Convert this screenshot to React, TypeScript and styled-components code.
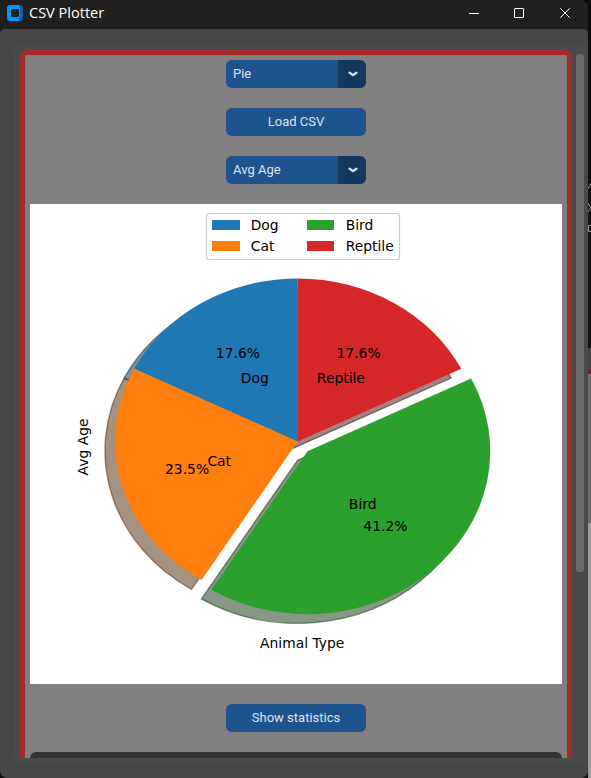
import React from "react";
import styled, { createGlobalStyle } from "styled-components";

const GlobalStyle = createGlobalStyle`
  * { box-sizing: border-box; }
  html, body { margin: 0; padding: 0; overflow: hidden; background: #0c0c10; }
`;

const Desktop = styled.div`
  display: flex;
  width: 591px;
  height: 778px;
  background: #0b0b10;
`;

const Window = styled.div`
  display: flex;
  flex-direction: column;
  width: 588px;
  height: 778px;
  background: #202020;
  border-radius: 0 7px 7px 7px;
  overflow: hidden;
`;

const TitleBar = styled.header`
  display: flex;
  align-items: center;
  flex: 0 0 29px;
  padding: 0 17px 3px 7px;
  color: #fff;
`;

const Title = styled.h1`
  flex: 1;
  margin: 0 0 0 6px;
  font: 400 14.5px/20px "Open Sans", "Noto Sans", sans-serif;
  letter-spacing: 0.02px;
`;

const Controls = styled.div`
  display: flex;
  gap: 35px;
  height: 11px;
`;

const Body = styled.main`
  display: flex;
  flex: 1;
  min-height: 0;
  padding: 15px 1px 14px 14px;
  background: #474747;
  border-radius: 5px 5px 7px 7px;
`;

const Scrollable = styled.div`
  display: flex;
  width: 573px;
  height: 720px;
  padding: 6px 3px 6px 6px;
  background: #494a4b;
  border-radius: 6px;
`;

const Viewport = styled.div`
  flex: none;
  width: 552px;
  height: 708px;
  overflow: hidden;
`;

const Content = styled.div`
  display: flex;
  flex-direction: column;
  align-items: center;
  gap: 20px;
  height: 980px;
  padding-top: 5px;
  border: 5px solid #a52a2a;
  border-radius: 6px;
  background: #808080;
`;

const Track = styled.div`
  display: flex;
  flex: none;
  width: 8px;
  margin-left: 4px;
  padding-top: 4px;
`;

const Thumb = styled.div`
  width: 8px;
  height: 518px;
  border-radius: 3px;
  background: #696969;
`;

const Button = styled.button`
  flex: none;
  width: 140px;
  height: 28px;
  padding: 0;
  border: 0;
  border-radius: 6px;
  background: #1f538d;
  color: #dce4ee;
  font: 400 13px/28px Roboto, sans-serif;
`;

const Select = styled(Button)`
  display: flex;
  overflow: hidden;
  text-align: left;
`;

const SelectValue = styled.span`
  flex: 1;
  padding-left: 7px;
`;

const SelectArrow = styled.span`
  display: flex;
  align-items: center;
  justify-content: center;
  width: 28px;
  height: 28px;
  padding-left: 1px;
  background: #14375e;
`;

const Figure = styled.svg`
  display: block;
  flex: none;
  width: 532px;
  height: 480px;
  background: #fff;
  font-family: "DejaVu Sans", sans-serif;
  font-size: 13.89px;
`;

const StatsPanel = styled.section`
  flex: none;
  width: 532px;
  height: 200px;
  border-radius: 6px;
  background: #333;
`;

const Backdrop = styled.aside`
  display: flex;
  flex-direction: column;
  width: 3px;
`;

const Strip = styled.div<{ $height: number; $color: string }>`
  flex: none;
  height: ${(p) => p.$height}px;
  background: ${(p) => p.$color};
`;

const Glyphs = styled.svg`
  display: block;
  flex: none;
  width: 3px;
  height: 55px;
`;

const strips: [number, string][] = [
  [114, "#131315"],
  [21, "#444"],
  [5, "#7c2020"],
  [149, "#6c6c6c"],
  [255, "#9d9c9b"],
];

const CX = 267.7;
const CY = 237.5;
const RX = 182.7;
const RY = 163;

type Slice = {
  name: string;
  share: number;
  explode: number;
  color: string;
  shadow: string;
  label: [number, number];
  pct: [number, number];
};

const slices: Slice[] = [
  { name: "Dog", share: 3, explode: 0, color: "#1f77b4", shadow: "#092436", label: [224.8, 179], pct: [207.9, 154] },
  { name: "Cat", share: 4, explode: 0, color: "#ff7f0e", shadow: "#4c2604", label: [189.2, 262], pct: [157.1, 270] },
  { name: "Bird", share: 7, explode: 0.08, color: "#2ca02c", shadow: "#0d300d", label: [332.7, 305], pct: [355.4, 327] },
  { name: "Reptile", share: 3, explode: 0, color: "#d62728", shadow: "#400c0c", label: [310.9, 179], pct: [328.6, 154] },
];

const total = slices.reduce((sum, s) => sum + s.share, 0);

let angle = Math.PI / 2;
const wedges = slices.map((s) => {
  const start = angle;
  const end = start + (s.share / total) * 2 * Math.PI;
  angle = end;
  const mid = (start + end) / 2;
  const x = CX + RX * s.explode * Math.cos(mid);
  const y = CY - RY * s.explode * Math.sin(mid);
  const at = (a: number) => `${(x + RX * Math.cos(a)).toFixed(2)} ${(y - RY * Math.sin(a)).toFixed(2)}`;
  return { ...s, d: `M${x} ${y}L${at(start)}A${RX} ${RY} 0 0 0 ${at(end)}Z` };
});

const legend = [
  { x: 182, y: 16, i: 0 },
  { x: 182, y: 37, i: 1 },
  { x: 277, y: 16, i: 2 },
  { x: 277, y: 37, i: 3 },
];

function PieChart() {
  return (
    <Figure viewBox="0 0 532 480">
      {wedges.map((w) => (
        <path
          key={w.name}
          d={w.d}
          transform="translate(-10 9.2)"
          fill={w.shadow}
          stroke={w.shadow}
          fillOpacity={0.5}
          strokeOpacity={0.5}
          strokeWidth={1.39}
        />
      ))}
      {wedges.map((w) => (
        <path key={w.name} d={w.d} fill={w.color} />
      ))}
      {wedges.map((w) => (
        <g key={w.name} textAnchor="middle">
          <text x={w.label[0]} y={w.label[1]}>{w.name}</text>
          <text x={w.pct[0]} y={w.pct[1]}>{((w.share / total) * 100).toFixed(1)}%</text>
        </g>
      ))}
      <rect x={176.5} y={9.5} width={193} height={46} rx={3} fill="#fff" stroke="#ccc" strokeWidth={1.2} />
      {legend.map(({ x, y, i }) => (
        <g key={i}>
          <rect x={x} y={y} width={i < 2 ? 28 : 27} height={10} fill={slices[i].color} />
          <text x={x + 38.7} y={y + 10}>{slices[i].name}</text>
        </g>
      ))}
      <text x={272.2} y={444} textAnchor="middle">Animal Type</text>
      <text transform="translate(58 243) rotate(-90)" textAnchor="middle">Avg Age</text>
    </Figure>
  );
}

function Dropdown({ value }: { value: string }) {
  return (
    <Select>
      <SelectValue>{value}</SelectValue>
      <SelectArrow>
        <svg width="10" height="6" viewBox="0 0 10 6" fill="none" stroke="#dce4ee" strokeWidth="2.3" strokeLinecap="round" strokeLinejoin="round">
          <path d="M1.5 1.6L5 4.1L8.5 1.6" />
        </svg>
      </SelectArrow>
    </Select>
  );
}

export default function App() {
  return (
    <>
      <GlobalStyle />
      <Desktop>
        <Window>
          <TitleBar>
            <svg width="16" height="16" viewBox="0 0 16 16">
              <rect width="16" height="16" rx="3.5" fill="#0065b3" />
              <path d="M3.5 0H12V2L13 4V12L12 14V16H3.5A3.5 3.5 0 0 1 0 12.5V3.5A3.5 3.5 0 0 1 3.5 0Z" fill="#0098ff" />
              <rect x="4" y="4" width="8" height="8" rx="1.2" fill="#202020" />
            </svg>
            <Title>CSV Plotter</Title>
            <Controls>
              <svg width="11" height="11" viewBox="0 0 11 11" stroke="#fff"><path d="M1 5.5H11" /></svg>
              <svg width="11" height="11" viewBox="0 0 11 11" stroke="#fff" fill="none"><rect x="0.5" y="0.5" width="9" height="9" rx="0.5" /></svg>
              <svg width="11" height="11" viewBox="0 0 11 11" stroke="#fff"><path d="M0.3 0.3L9.7 9.7M9.7 0.3L0.3 9.7" /></svg>
            </Controls>
          </TitleBar>
          <Body>
            <Scrollable>
              <Viewport>
                <Content>
                  <Dropdown value="Pie" />
                  <Button>Load CSV</Button>
                  <Dropdown value="Avg Age" />
                  <PieChart />
                  <Button>Show statistics</Button>
                  <StatsPanel />
                </Content>
              </Viewport>
              <Track><Thumb /></Track>
            </Scrollable>
          </Body>
        </Window>
        <Backdrop>
          <Strip $height={179} $color="#0b0b10" />
          <Glyphs viewBox="0 0 3 55" fill="none" stroke="#999">
            <rect width="3" height="55" fill="#131315" stroke="none" />
            <path d="M0 9.5L3 4.5M0 24L2.5 28.5L0 33M3 46.5H0.5V52.5H3" />
          </Glyphs>
          {strips.map(([height, color]) => (
            <Strip key={color} $height={height} $color={color} />
          ))}
        </Backdrop>
      </Desktop>
    </>
  );
}
